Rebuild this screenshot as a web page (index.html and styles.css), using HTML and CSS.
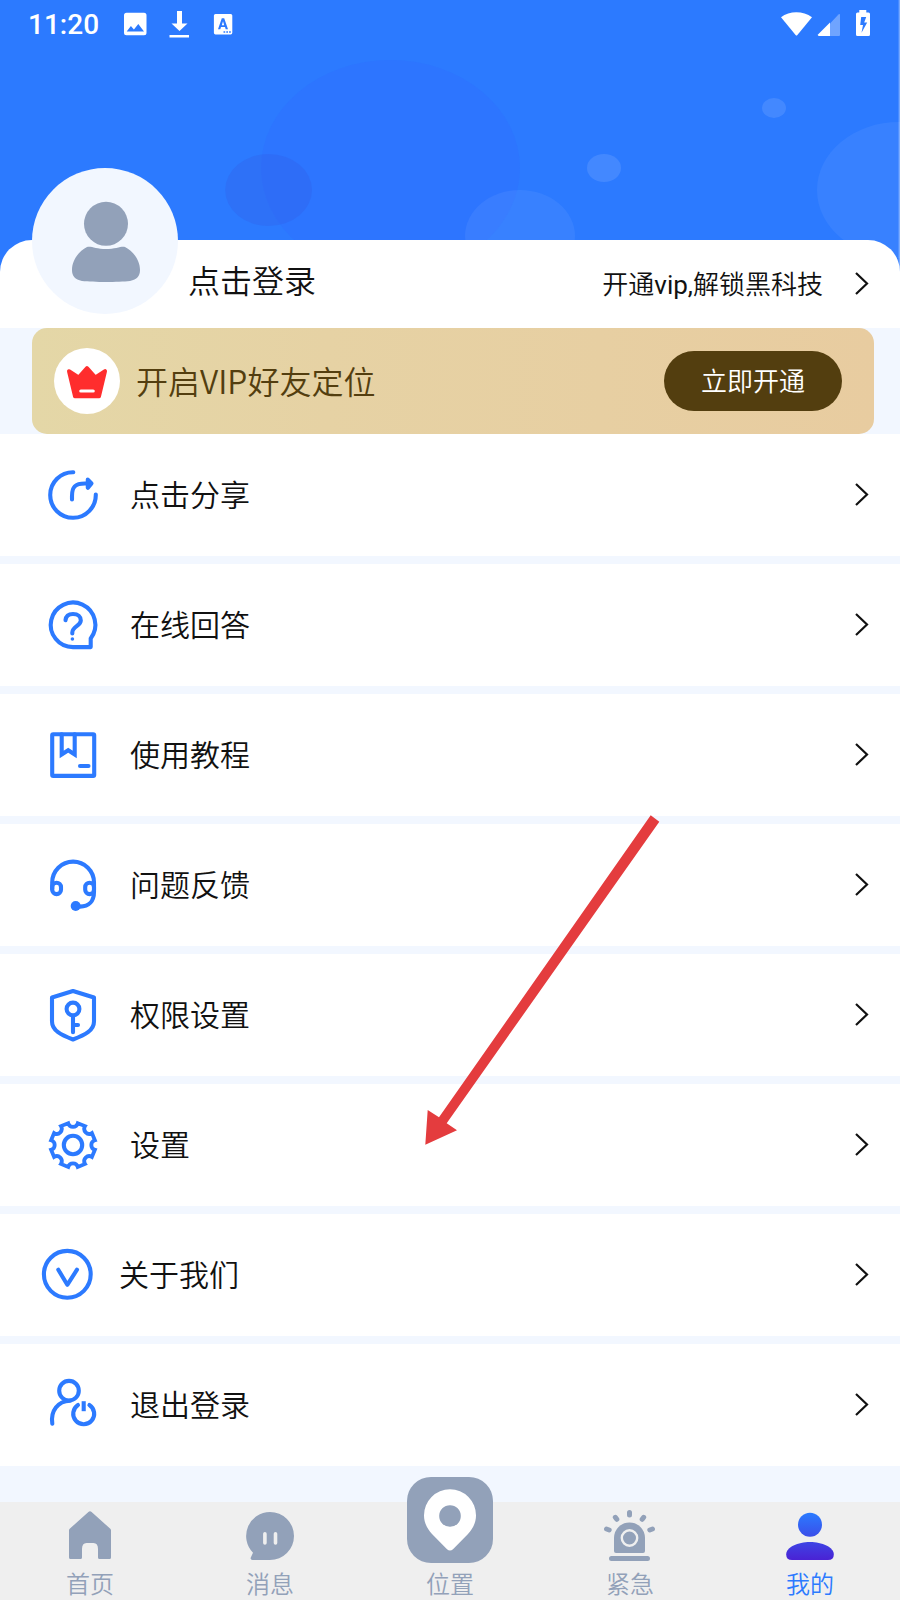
FILE: index.html
```html
<!DOCTYPE html>
<html lang="zh-CN">
<head>
<meta charset="utf-8">
<title>我的</title>
<link rel="stylesheet" href="styles.css">
</head>
<body>
<svg class="defs" width="0" height="0">
  <symbol id="chevron" viewBox="0 0 16 26"><path d="M2 2 13 12.500 2 23" fill="none" stroke="#111" stroke-width="2.200"/></symbol>
</svg>
<div class="screen">
  <header class="hero">
    <svg class="bubbles" viewBox="0 0 900 290" width="900" height="290">
      <ellipse cx="390.5" cy="168" rx="129.5" ry="108" fill="#3366ff" fill-opacity=".22"/>
      <ellipse cx="268.6" cy="190" rx="43.4" ry="36" fill="#3558e0" fill-opacity=".25"/>
      <g fill="#fff">
        <ellipse cx="520" cy="236" rx="55" ry="46" fill-opacity=".06"/>
        <ellipse cx="604" cy="168" rx="17" ry="14" fill-opacity=".11"/>
        <ellipse cx="774" cy="108" rx="12" ry="10" fill-opacity=".11"/>
        <ellipse cx="899" cy="190" rx="82" ry="68" fill-opacity=".06"/>
        <rect x="898.6" y="0" width="1.4" height="290" fill-opacity=".35"/>
      </g>
    </svg>
    <div class="status">
      <span class="time">11:20</span>
      <svg class="status-left" viewBox="124 8 112 32" width="112" height="32">
        <path fill="#fff" fill-rule="evenodd" d="M126.500 12.700h17.500a2.500 2.500 0 0 1 2.500 2.500v17.500a2.500 2.500 0 0 1-2.500 2.500h-17.500a2.500 2.500 0 0 1-2.500-2.500V15.200a2.500 2.500 0 0 1 2.500-2.500zM126.700 31.500h17.300l-5.700-7.500-4.400 5.600-3-3.700z"/>
        <path fill="#fff" d="M177 11h5v12.500h5.500l-8 7.500-8-7.500h5.500zM169.500 35h19.500v2.500h-19.500z"/>
        <path fill="#fff" fill-rule="evenodd" d="M215.500 14h15.200a1.600 1.600 0 0 1 1.600 1.600v17.200a1.600 1.600 0 0 1-1.600 1.600h-15.200a1.600 1.600 0 0 1-1.600-1.600V15.600a1.600 1.600 0 0 1 1.600-1.600zM221.800 18.300 218 29.200h2.300l.7-2.200h4l.7 2.200h2.300l-3.800-10.900zm1.200 3 1.200 3.900h-2.400zM223.500 31.200h1.700v1.600h-1.700zm2.800 0h1.700v1.600h-1.700zm2.800 0h1.700v1.600h-1.700z"/>
      </svg>
      <svg class="status-right" viewBox="780 8 92 32" width="92" height="32">
        <path fill="#fff" d="M781 17.200C789.500 10.500 803 10.500 812 17.200L797.400 35Q796.500 36 795.600 35Z"/>
        <path fill="#fff" fill-opacity=".32" d="M830 23.500 838.500 14.500q1.500-1 1.500.5v20q0 1-1 1h-9z"/>
        <path fill="#fff" d="M830 22.500V36h-11q-1.800-.5-1-1.500z"/>
        <path fill="#fff" fill-rule="evenodd" d="M859.300 10h7v2.500h2.200q1.500 0 1.500 1.500v20.500q0 1.500-1.500 1.500h-11q-1.500 0-1.500-1.500V14q0-1.500 1.500-1.500h1.800zM861.200 17l-1 8h2.800l-1.500 7.800 5.700-10.300h-3l2-5.500z"/>
      </svg>
    </div>
  </header>

  <section class="profile">
    <div class="avatar">
      <svg viewBox="0 0 146 146" width="146" height="146">
        <circle cx="74" cy="55.800" r="22" fill="#92a1b9"/>
        <path fill="#92a1b9" d="M55 79C58.500 77.500 64 81 74 81S90 77.500 93 79C101 83 108 92 108 102C108 108 105 111.500 98 113C86 114.300 62 114.300 50 113C43 111.500 40 108 40 102C40 92 47 83 55 79Z"/>
      </svg>
    </div>
    <span class="login">点击登录</span>
    <span class="vip-tip">开通<span class="latin">vip,</span>解锁黑科技</span>
    <svg class="chevron"><use href="#chevron"/></svg>
  </section>

  <section class="vip">
    <span class="crown">
      <svg viewBox="0 0 66 66" width="66" height="66">
        <path fill="#ff2d2d" stroke="#ff2d2d" stroke-width="4" stroke-linejoin="round" d="M15 23.200 24.600 29.500 33 20.200 41.400 29.500 51 23.200 45 48.200H21Z"/>
        <path d="M26.800 43H39.200" stroke="#fff" stroke-width="3.200" stroke-linecap="round"/>
      </svg>
    </span>
    <span class="vip-title">开启VIP好友定位</span>
    <button class="vip-btn">立即开通</button>
  </section>

  <main class="menu">
    <div class="row">
      <svg class="icon" viewBox="0 0 60 60"><path d="M30.300 7.200A22.800 22.800 0 1 0 52.800 29.500M29 34.500V31C29 22 32 18.500 42 18.500H47"/><path class="fill" d="M44.800 14.600 48.500 18.500 44.800 22.800Z"/></svg>
      <span class="label">点击分享</span><svg class="chevron"><use href="#chevron"/></svg>
    </div>
    <div class="row">
      <svg class="icon" viewBox="0 0 60 60"><path d="M30 52.100A22.300 22.300 0 1 1 47.700 43.400V52.100Z"/><path d="M22.500 25.200C23 20.500 26 19 30 19C35 19 37.800 21.500 37.800 25.500C37.800 31 29.300 31.500 29.300 37.500V38.500"/><circle class="dot" cx="29.400" cy="44" r="1.800"/></svg>
      <span class="label">在线回答</span><svg class="chevron"><use href="#chevron"/></svg>
    </div>
    <div class="row">
      <svg class="icon" viewBox="0 0 60 60"><rect x="9.200" y="9.300" width="42" height="41.600" rx="1"/><path stroke-linejoin="miter" d="M18.700 9.300V29.500L25.200 25.200 31.700 29.500V9.300"/><path d="M37 41H45.500"/></svg>
      <span class="label">使用教程</span><svg class="chevron"><use href="#chevron"/></svg>
    </div>
    <div class="row">
      <svg class="icon" viewBox="0 0 60 60"><path d="M9.200 34V27.500A20.900 20.900 0 0 1 51 27.500V37C51 46 46 51.600 37 51.600"/><rect x="9.200" y="27.700" width="8.800" height="11.400" rx="4.400"/><rect x="42.200" y="27.700" width="8.800" height="11.400" rx="4.400"/><circle class="dot" cx="32.700" cy="51" r="5"/></svg>
      <span class="label">问题反馈</span><svg class="chevron"><use href="#chevron"/></svg>
    </div>
    <div class="row">
      <svg class="icon" viewBox="0 0 60 60"><path d="M30 6 51 12.500V36.500C51 45.500 42 50 30 54.500C18 50 9 45.500 9 36.500V12.500Z"/><circle cx="30" cy="24" r="6.400"/><path d="M30 31V47.200M30 40H35"/></svg>
      <span class="label">权限设置</span><svg class="chevron"><use href="#chevron"/></svg>
    </div>
    <div class="row">
      <svg class="icon" viewBox="0 0 60 60"><circle cx="30" cy="30" r="9.200"/><path stroke-width="3.800" stroke-linejoin="miter" d="M25.200 8.200A5 5 0 0 0 34.800 8.200L42 11.100A5 5 0 0 0 48.900 18L51.900 25.200A5 5 0 0 0 51.900 34.800L48.900 42A5 5 0 0 0 42 48.900L34.800 51.900A5 5 0 0 0 25.200 51.900L18 48.900A5 5 0 0 0 11.100 42L8.100 34.800A5 5 0 0 0 8.100 25.200L11.100 18A5 5 0 0 0 18 11.100Z"/></svg>
      <span class="label">设置</span><svg class="chevron"><use href="#chevron"/></svg>
    </div>
    <div class="row row-about">
      <svg class="icon" viewBox="0 0 60 60"><circle cx="30.300" cy="29.300" r="23.400"/><path d="M21.300 24.700 30.300 39.800 40 24.700"/></svg>
      <span class="label">关于我们</span><svg class="chevron"><use href="#chevron"/></svg>
    </div>
    <div class="row">
      <svg class="icon" viewBox="0 0 60 60"><circle cx="26" cy="15.700" r="9.800"/><path d="M9.300 48.800C7.300 36 15 26 27 25.800M35 30A10.500 10.500 0 1 0 46.400 30"/><path stroke-linecap="butt" d="M40.700 26.200V36.200"/></svg>
      <span class="label">退出登录</span><svg class="chevron"><use href="#chevron"/></svg>
    </div>
  </main>

  <nav class="tabs">
    <div class="tab">
      <svg viewBox="0 0 60 60" width="60" height="60"><path fill="#92a1b9" d="M30 9.200Q30.800 9.200 31.600 9.900L50.300 26.800Q51 27.500 51 28.500V55.500Q51 57 49.500 57H39.500Q38 57 38 55.500V47Q38 41 33.500 41H26.500Q22 41 22 47V55.500Q22 57 20.500 57H10.500Q9 57 9 55.500V28.500Q9 27.500 9.700 26.800L28.400 9.900Q29.200 9.200 30 9.200Z"/></svg>
      <span>首页</span>
    </div>
    <div class="tab">
      <svg viewBox="0 0 60 60" width="60" height="60"><path fill="#92a1b9" d="M30 10A24 24 0 0 1 30 58H12.500Q10 58 10.800 55.500L13 50.800A24 24 0 0 1 30 10Z"/><path d="M24.900 31.700V41M35.500 31.700V41" stroke="#efefef" stroke-width="3.600" stroke-linecap="round"/></svg>
      <span>消息</span>
    </div>
    <div class="tab tab-center">
      <span class="pin"><svg viewBox="0 0 86 86" width="86" height="86"><path fill="#fff" fill-rule="evenodd" d="M43 12.300A26 26 0 0 0 17 38.500C17 46 20.500 52 25 57L40 72.200Q43 75 46 72.200L61 57C65.500 52 69 46 69 38.500A26 26 0 0 0 43 12.300ZM43 28.200A10.800 10.800 0 1 1 43 49.800A10.800 10.800 0 1 1 43 28.200Z"/></svg></span>
      <span>位置</span>
    </div>
    <div class="tab">
      <svg viewBox="0 0 60 60" width="60" height="60"><path fill="#92a1b9" d="M14 36A15.500 15.500 0 0 1 45 36V49Q45 51 43 51H16Q14 51 14 49Z"/><circle cx="29.500" cy="36" r="7.700" fill="#92a1b9" stroke="#efefef" stroke-width="2.400"/><path fill="none" stroke="#92a1b9" stroke-width="5" stroke-linecap="round" d="M11.500 56.500H47.500M29.500 10.500V13M15.300 15.300 16.800 17.300M43.700 15.300 42.200 17.300M6.500 27 9.200 28M52.500 27 49.800 28"/></svg>
      <span>紧急</span>
    </div>
    <div class="tab tab-active">
      <svg viewBox="0 0 60 60" width="60" height="60"><defs><linearGradient id="me" gradientUnits="userSpaceOnUse" x1="0" y1="11" x2="0" y2="58"><stop offset="0" stop-color="#2b7bff"/><stop offset="1" stop-color="#4a22d4"/></linearGradient></defs><g fill="url(#me)"><circle cx="30" cy="22.700" r="12"/><path d="M30 40C42 40 53.800 45 53.800 52.500Q53.800 58 48 58H12Q6.200 58 6.200 52.500C6.200 45 18 40 30 40Z"/></g></svg>
      <span>我的</span>
    </div>
  </nav>

  <svg class="pointer" viewBox="0 0 236 332" width="236" height="332"><path fill="#e43c3e" d="M.3 331.700 2.700 297 14 304.300 225.700 2.300 234.300 8.700 21.700 310.300 32 317.300Z"/></svg>
</div>
</body>
</html>
```
FILE: styles.css
```css
* { box-sizing: border-box; }

body {
  margin: 0;
  font-family: Roboto, "Noto Sans CJK SC", sans-serif;
  font-weight: 350;
  color: #111;
}

svg { display: block; }
.defs { position: absolute; }

.screen {
  position: relative;
  display: flex;
  flex-direction: column;
  width: 900px;
  height: 1600px;
  overflow: hidden;
  background: #f2f7ff;
}

/* blue header */
.hero {
  position: relative;
  height: 290px;
  margin-bottom: -50px;
  flex: none;
  background: #2c7aff;
}
.bubbles { position: absolute; inset: 0; }

.status {
  position: relative;
  display: flex;
  align-items: center;
  height: 48px;
  padding: 0 28px;
}
.time {
  width: 96px;
  font-size: 28px;
  line-height: 48px;
  font-weight: 500;
  color: #fff;
  padding-top: 2px;
}
.status-right { margin-left: auto; }

/* profile card */
.profile {
  position: relative;
  display: flex;
  align-items: center;
  height: 88px;
  flex: none;
  padding: 0 30px 0 32px;
  border-radius: 32px 32px 0 0;
  background: #fff;
}
.avatar {
  width: 146px;
  height: 146px;
  margin-top: -72px;
  border-radius: 50%;
  background: #f2f7ff;
  flex: none;
  align-self: flex-start;
}
.login {
  margin-left: 10px;
  font-size: 32px;
  line-height: 40px;
  padding-bottom: 4px;
}
.vip-tip {
  margin-left: auto;
  font-size: 26px;
  line-height: 40px;
  padding-top: 2px;
}
.latin { font-weight: 400; }
.chevron {
  width: 16px;
  height: 26px;
  flex: none;
}
.profile .chevron { margin-left: 31px; }

/* VIP banner */
.vip {
  display: flex;
  align-items: center;
  height: 106px;
  flex: none;
  margin: 0 26px 0 32px;
  padding: 0 32px 0 22px;
  border-radius: 15px;
  background: linear-gradient(90deg, #e4d7a7 0%, #e6d2a4 35%, #e8cca0 100%);
}
.crown {
  width: 66px;
  height: 66px;
  border-radius: 50%;
  background: #fff;
}
.vip-title {
  margin-left: 16px;
  padding-bottom: 3px;
  font-family: "Noto Sans CJK SC", sans-serif;
  font-size: 32px;
  line-height: 40px;
  color: #533e0f;
}
.vip-btn {
  width: 178px;
  height: 60px;
  margin-left: auto;
  padding: 0 0 4px;
  border: 0;
  border-radius: 30px;
  background: #533e0f;
  color: #fff;
  font: inherit;
  font-size: 26px;
}

/* menu list */
.menu {
  display: flex;
  flex-direction: column;
  gap: 8px;
  flex: none;
}
.row {
  display: flex;
  align-items: center;
  height: 122px;
  padding: 0 30px 0 43px;
  background: #fff;
}
.row-about { padding-left: 37px; }
.icon {
  width: 60px;
  height: 60px;
  fill: none;
  stroke: #2c7aff;
  stroke-width: 4.1;
  stroke-linecap: round;
  stroke-linejoin: round;
}
.icon .fill { fill: #2c7aff; }
.icon .dot { fill: #2c7aff; stroke: none; }
.label {
  margin-left: 27px;
  padding-top: 2px;
  font-size: 30px;
  line-height: 40px;
}
.row-about .label { margin-left: 22px; }
.row .chevron { margin-left: auto; }

/* bottom tabs */
.tabs {
  display: flex;
  height: 98px;
  margin-top: auto;
  flex: none;
  background: #efefef;
}
.tab {
  flex: 1;
  display: flex;
  flex-direction: column;
  align-items: center;
  font-size: 24px;
  line-height: 30px;
  color: #92a1b9;
}
.tab > svg { flex: none; }
.tab > span:last-child { margin-top: 8px; }
.tab-active { color: #2c7aff; }
.pin {
  width: 86px;
  height: 86px;
  flex: none;
  margin-top: -25px;
  margin-bottom: -1px;
  border-radius: 24px;
  background: #92a1b9;
}

/* red pointer laid over the list */
.pointer {
  position: absolute;
  left: 425px;
  top: 813px;
}
```
